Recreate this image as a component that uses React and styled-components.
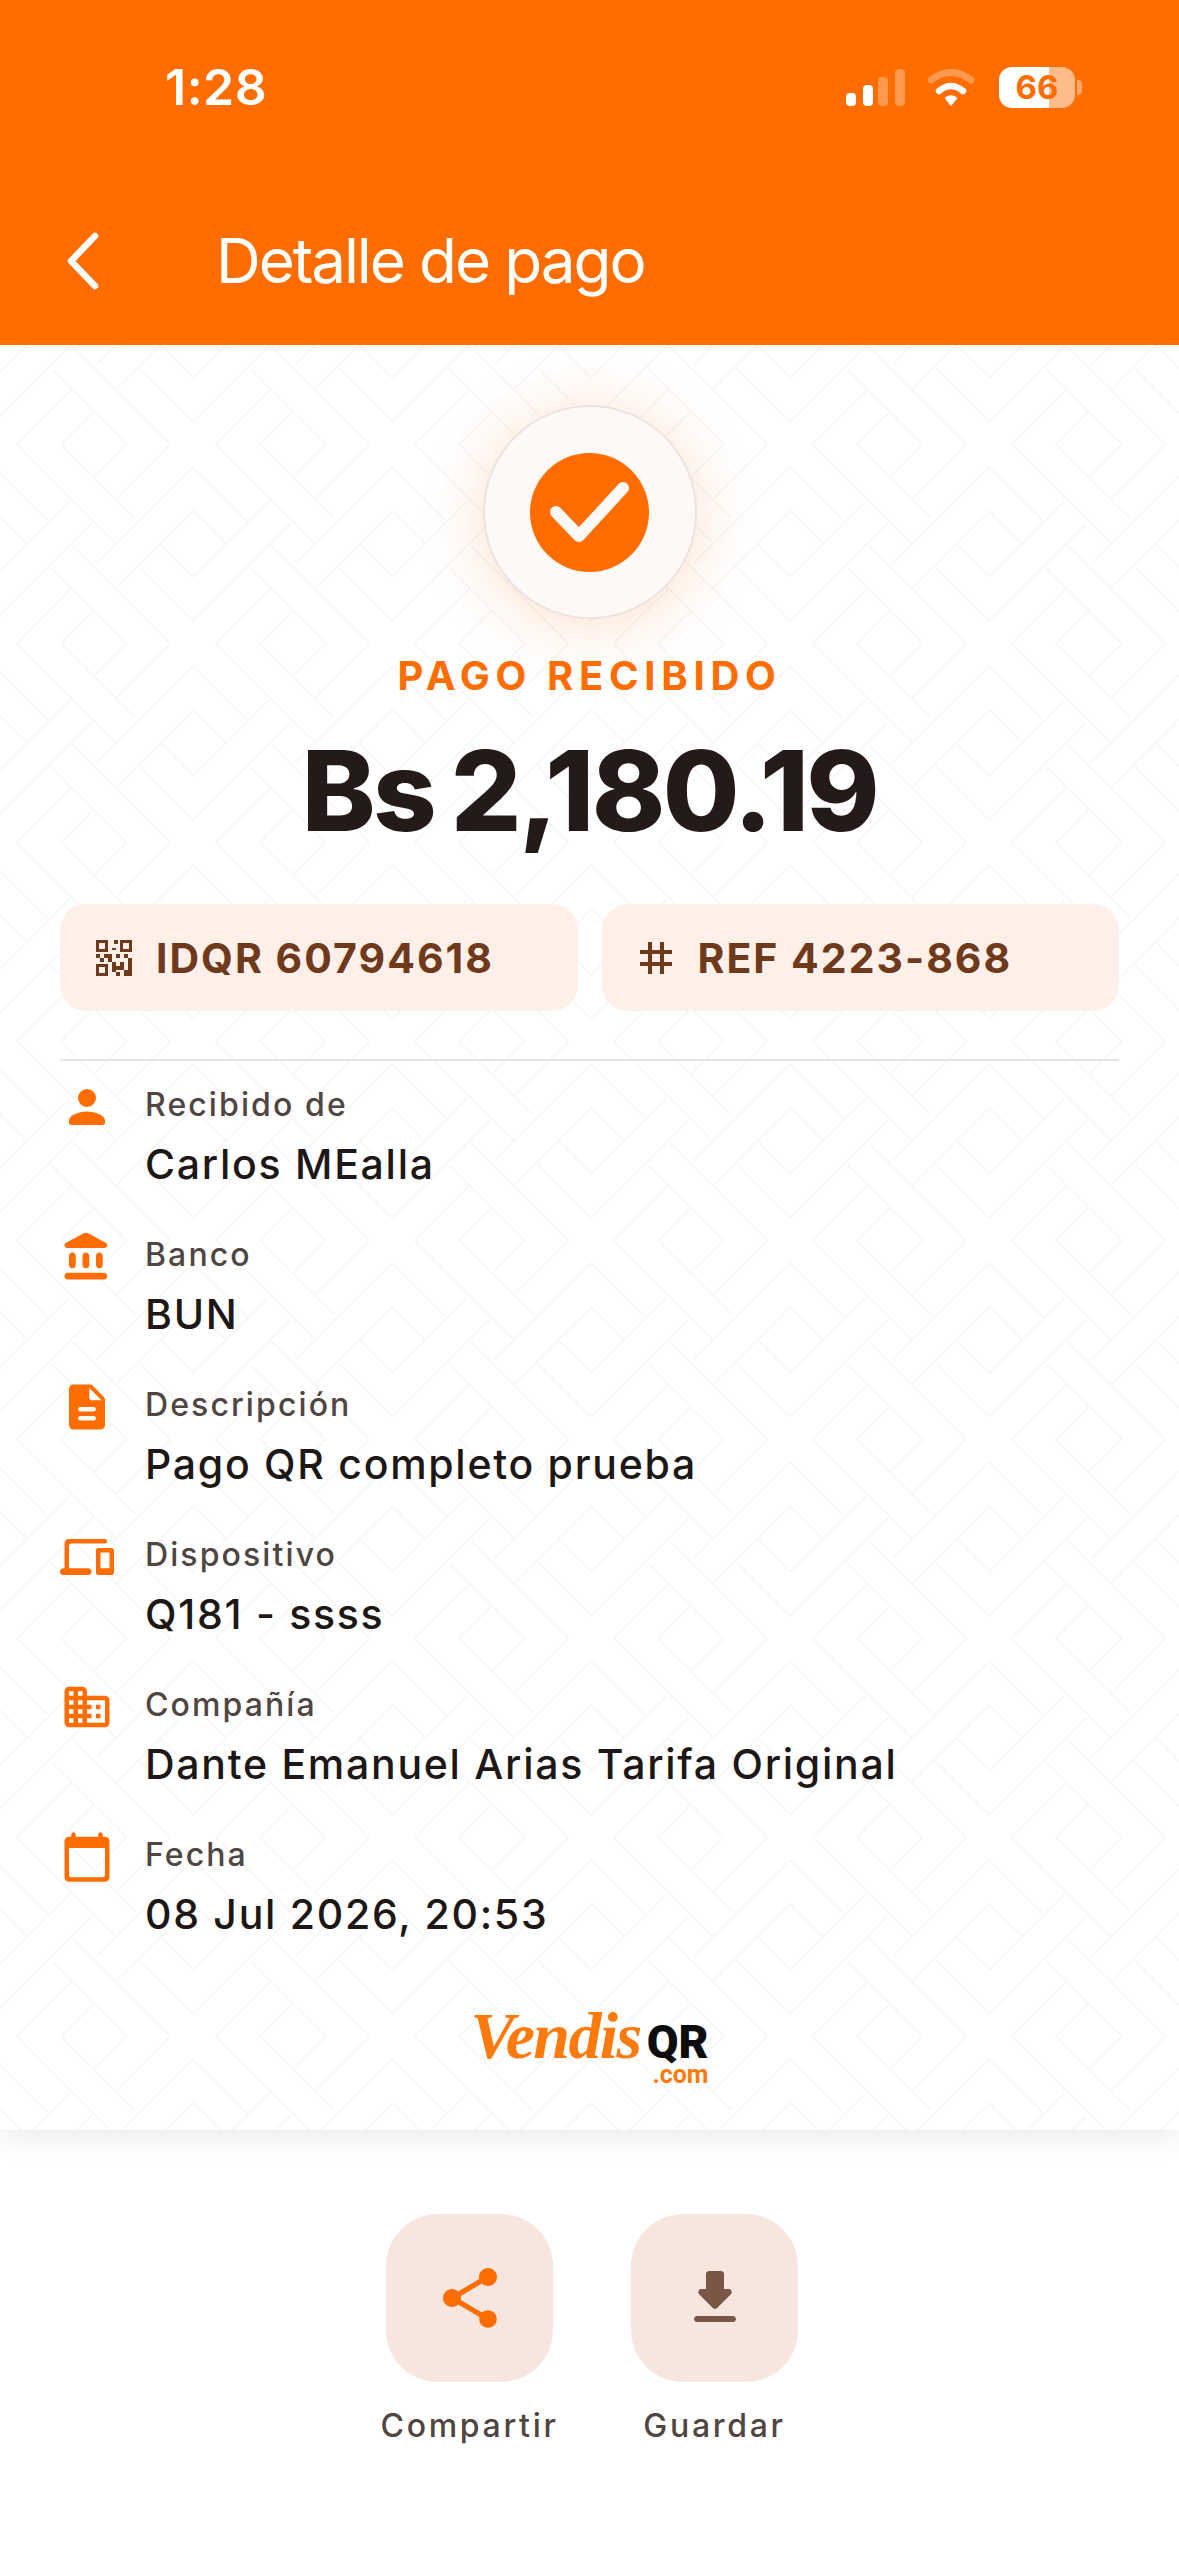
import React from "react";
import styled, { createGlobalStyle } from "styled-components";

const backSlash = [
  [-198, [[218, 510], [578, 740]]],
  [-67, [[155, 380], [578, 680]]],
  [130, [[183, 405], [480, 578]]],
  [263, [[50, 350], [420, 578]]],
];
const slash = [
  [363, [[50, 213], [290, 578]]],
  [496, [[183, 280], [350, 578]]],
  [693, [[-19, 208], [285, 380]]],
  [825, [[-19, 275], [350, 510]]],
];

const buildPattern = () => {
  let d = "";
  for (let i = -2; i <= 2; i++) {
    for (let j = -2; j <= 2; j++) {
      const ox = i * 597;
      const oy = j * 597;
      backSlash.forEach(([c, segs]) =>
        segs.forEach(([a, b]) => {
          d += `M${a + ox} ${a + c + oy}L${b + ox} ${b + c + oy}`;
        })
      );
      slash.forEach(([s, segs]) =>
        segs.forEach(([a, b]) => {
          d += `M${a + ox} ${s - a + oy}L${b + ox} ${s - b + oy}`;
        })
      );
    }
  }
  const svg = `<svg xmlns="http://www.w3.org/2000/svg" width="199" height="199" viewBox="0 0 597 597"><path d="${d}" fill="none" stroke="#f7f7f7" stroke-width="6"/></svg>`;
  return `url("data:image/svg+xml,${encodeURIComponent(svg)}")`;
};

const patternUrl = buildPattern();

const Global = createGlobalStyle`
  html, body { margin: 0; padding: 0; background: #fff; }
  body { font-family: Inter, "Noto Sans", "Liberation Sans", sans-serif; }
  * { box-sizing: border-box; }
`;

const Screen = styled.div`
  width: 1179px;
  height: 2556px;
  background: #ffffff;
  overflow: hidden;
  display: flex;
  flex-direction: column;
`;

const Header = styled.header`
  height: 345px;
  flex: none;
  background: #ff6d00;
  color: #ffffff;
  position: relative;
  z-index: 2;
`;

const StatusBar = styled.div`
  height: 120px;
  padding: 57px 104px 0 165px;
  display: flex;
  justify-content: space-between;
  align-items: flex-start;
`;

const Time = styled.div`
  font-size: 50px;
  line-height: 60px;
  font-weight: 600;
  letter-spacing: 0.5px;
`;

const StatusIcons = styled.div`
  display: flex;
  align-items: center;
  padding-top: 10px;
  gap: 23px;
`;

const Battery = styled.div`
  width: 76px;
  height: 41px;
  border-radius: 13px;
  background: linear-gradient(90deg, #ffffff 0 66%, #ffbc8a 66% 100%);
  color: #ff6d00;
  font-size: 33px;
  font-weight: 700;
  line-height: 41px;
  text-align: center;
  position: relative;
  &::after {
    content: "";
    position: absolute;
    right: -7px;
    top: 13px;
    width: 5px;
    height: 15px;
    border-radius: 0 4px 4px 0;
    background: #ffa766;
  }
`;

const NavBar = styled.div`
  display: flex;
  align-items: center;
  height: 100px;
  margin-top: 91px;
  padding-left: 62px;
  gap: 114px;
`;

const Title = styled.h1`
  margin: 0;
  font-size: 62px;
  line-height: 100px;
  font-weight: 400;
  letter-spacing: -2.1px;
`;

const Card = styled.main`
  height: 1785px;
  flex: none;
  padding: 60px 60px 0;
  background-color: #fff;
  background-image: ${patternUrl};
  background-size: 199px 199px;
  background-position: 0 -5px;
  box-shadow: 0 6px 30px rgba(0, 0, 0, 0.09);
  display: flex;
  flex-direction: column;
  align-items: center;
  position: relative;
  z-index: 1;
`;

const Halo = styled.div`
  width: 214px;
  height: 214px;
  flex: none;
  border-radius: 50%;
  background: #fef9f7;
  border: 2px solid #ebe3e0;
  box-shadow: 0 6px 64px rgba(255, 109, 0, 0.22);
  display: flex;
  align-items: center;
  justify-content: center;
`;

const Tick = styled.div`
  width: 119px;
  height: 119px;
  border-radius: 50%;
  background: #ff6d00;
  display: flex;
`;

const Status = styled.div`
  margin-top: 32px;
  font-size: 40px;
  line-height: 50px;
  font-weight: 700;
  letter-spacing: 5.7px;
  color: #ff6d00;
`;

const Amount = styled.div`
  margin-top: 25px;
  font-size: 111px;
  line-height: 130px;
  font-weight: 800;
  letter-spacing: -2.6px;
  word-spacing: -5px;
  color: #241b18;
`;

const Chips = styled.div`
  align-self: stretch;
  margin-top: 48px;
  display: flex;
  gap: 24px;
`;

const Chip = styled.div`
  flex: 1;
  height: 107px;
  border-radius: 26px;
  padding-left: 30px;
  background: rgba(254, 238, 231, 0.9);
  color: #6f3a1c;
  display: flex;
  align-items: center;
  gap: 18px;
  font-size: 41px;
  font-weight: 700;
  letter-spacing: 2px;
`;

const Divider = styled.div`
  align-self: stretch;
  height: 2px;
  margin-top: 48px;
  background: #ebe3e0;
`;

const Rows = styled.div`
  align-self: stretch;
  margin-top: 19px;
  display: flex;
  flex-direction: column;
`;

const Row = styled.div`
  height: 150px;
  display: flex;
  gap: 31px;
`;

const RowText = styled.div`
  display: flex;
  flex-direction: column;
`;

const Label = styled.div`
  margin-top: 2px;
  font-size: 32px;
  line-height: 46px;
  font-weight: 500;
  letter-spacing: 2.1px;
  color: #4f4542;
`;

const Value = styled.div`
  margin-top: 11px;
  font-size: 41px;
  line-height: 50px;
  font-weight: 500;
  letter-spacing: 1.72px;
  color: #1d1715;
`;

const Logo = styled.div`
  margin-top: 18px;
  display: flex;
  align-items: flex-start;
  gap: 6px;
  height: 76px;
`;

const LogoScript = styled.span`
  font-family: "Liberation Serif", serif;
  font-style: italic;
  font-weight: 700;
  font-size: 66px;
  line-height: 76px;
  letter-spacing: -1.6px;
  color: #ff7a0d;
`;

const LogoSide = styled.div`
  display: flex;
  flex-direction: column;
  align-items: flex-end;
  padding-top: 22px;
`;

const LogoQR = styled.span`
  font-family: Roboto, sans-serif;
  font-weight: 900;
  font-size: 46px;
  line-height: 44px;
  color: #0d0d0d;
`;

const LogoCom = styled.span`
  font-family: Roboto, sans-serif;
  font-weight: 700;
  font-size: 25px;
  line-height: 22px;
  color: #ff7a0d;
`;

const Actions = styled.div`
  flex: 1;
  padding: 84px 0 0 5px;
  display: flex;
  justify-content: center;
  gap: 78px;
`;

const Action = styled.div`
  width: 167px;
  display: flex;
  flex-direction: column;
  align-items: center;
`;

const ActionButton = styled.button`
  width: 167px;
  height: 168px;
  padding: 0;
  border: 0;
  border-radius: 52px;
  background: #f6e6de;
  color: ${(p) => p.$color};
  display: flex;
  align-items: center;
  justify-content: center;
`;

const ActionLabel = styled.div`
  margin-top: 21px;
  white-space: nowrap;
  font-size: 32px;
  line-height: 46px;
  font-weight: 500;
  letter-spacing: 2.7px;
  color: #4f4542;
`;

const Glyph = ({ size = 54, color = "#ff6d00", d, children }) => (
  <svg width={size} height={size} viewBox="0 0 24 24" fill={color} style={{ flex: "none" }}>
    {d ? <path d={d} /> : children}
  </svg>
);

const ICONS = {
  person:
    "M12 12a4 4 0 1 0 0-8 4 4 0 0 0 0 8zm0 2c-2.67 0-8 1.34-8 4v1c0 .55.45 1 1 1h14c.55 0 1-.45 1-1v-1c0-2.66-5.33-4-8-4z",
  bank:
    "M4 11.5v4c0 .83.67 1.5 1.5 1.5S7 16.33 7 15.5v-4c0-.83-.67-1.5-1.5-1.5S4 10.67 4 11.5zm6 0v4c0 .83.67 1.5 1.5 1.5s1.5-.67 1.5-1.5v-4c0-.83-.67-1.5-1.5-1.5s-1.5.67-1.5 1.5zM3.5 22h16c.83 0 1.5-.67 1.5-1.5s-.67-1.5-1.5-1.5h-16c-.83 0-1.5.67-1.5 1.5S2.67 22 3.5 22zM16 11.5v4c0 .83.67 1.5 1.5 1.5s1.5-.67 1.5-1.5v-4c0-.83-.67-1.5-1.5-1.5s-1.5.67-1.5 1.5zM10.57 1.49l-7.9 4.16c-.41.21-.67.64-.67 1.1C2 7.44 2.56 8 3.25 8h16.51C20.44 8 21 7.44 21 6.75c0-.46-.26-.89-.67-1.1l-7.9-4.16c-.58-.31-1.28-.31-1.86 0z",
  doc:
    "M14.59 2.59c-.38-.38-.89-.59-1.42-.59H6c-1.1 0-2 .9-2 2v16c0 1.1.89 2 1.99 2H18c1.1 0 2-.9 2-2V8.83c0-.53-.21-1.04-.59-1.41l-4.82-4.83zM15 18H9c-.55 0-1-.45-1-1s.45-1 1-1h6c.55 0 1 .45 1 1s-.45 1-1 1zm0-4H9c-.55 0-1-.45-1-1s.45-1 1-1h6c.55 0 1 .45 1 1s-.45 1-1 1zm-2-6V3.5L18.5 9H14c-.55 0-1-.45-1-1z",
  devices:
    "M4 7c0-.55.45-1 1-1h15c.55 0 1-.45 1-1s-.45-1-1-1H4c-1.1 0-2 .9-2 2v11h-.5c-.83 0-1.5.67-1.5 1.5S.67 20 1.5 20h11c.83 0 1.5-.67 1.5-1.5s-.67-1.5-1.5-1.5H4V7zm19 1h-6c-.55 0-1 .45-1 1v10c0 .55.45 1 1 1h6c.55 0 1-.45 1-1V9c0-.55-.45-1-1-1zm-1 9h-4v-7h4v7z",
  domain:
    "M12 7V5c0-1.1-.9-2-2-2H4c-1.1 0-2 .9-2 2v14c0 1.1.9 2 2 2h16c1.1 0 2-.9 2-2V9c0-1.1-.9-2-2-2h-8zM6 19H4v-2h2v2zm0-4H4v-2h2v2zm0-4H4V9h2v2zm0-4H4V5h2v2zm4 12H8v-2h2v2zm0-4H8v-2h2v2zm0-4H8V9h2v2zm0-4H8V5h2v2zm10 12h-8v-2h2v-2h-2v-2h2v-2h-2V9h8v10zm-2-8h-2v2h2v-2zm0 4h-2v2h2v-2z",
  calendar:
    "M20 3h-1V2c0-.55-.45-1-1-1s-1 .45-1 1v1H7V2c0-.55-.45-1-1-1s-1 .45-1 1v1H4c-1.1 0-2 .9-2 2v16c0 1.1.9 2 2 2h16c1.1 0 2-.9 2-2V5c0-1.1-.9-2-2-2zm-1 18H5c-.55 0-1-.45-1-1V8h16v12c0 .55-.45 1-1 1z",
  share:
    "M18 16.08c-.76 0-1.44.3-1.96.77L8.91 12.7c.05-.23.09-.46.09-.7s-.04-.47-.09-.7l7.05-4.11c.54.5 1.25.81 2.04.81 1.66 0 3-1.34 3-3s-1.34-3-3-3-3 1.34-3 3c0 .24.04.47.09.7L8.04 9.81C7.5 9.31 6.79 9 6 9c-1.66 0-3 1.34-3 3s1.34 3 3 3c.79 0 1.5-.31 2.04-.81l7.12 4.16c-.05.21-.08.43-.08.65 0 1.61 1.31 2.92 2.92 2.92 1.61 0 2.92-1.31 2.92-2.92s-1.31-2.92-2.92-2.92z",
  download:
    "M16.59 9H15V4c0-.55-.45-1-1-1h-4c-.55 0-1 .45-1 1v5H7.41c-.89 0-1.34 1.08-.71 1.71l4.59 4.59c.39.39 1.02.39 1.41 0l4.59-4.59c.63-.63.19-1.71-.7-1.71zM5 19c0 .55.45 1 1 1h12c.55 0 1-.45 1-1s-.45-1-1-1H6c-.55 0-1 .45-1 1z",
  qr:
    "M15 21h-2v-2h2v2zm-2-7h-2v5h2v-5zm8-2h-2v4h2v-4zm-2-2h-2v2h2v-2zM7 12H5v2h2v-2zm-2-2H3v2h2v-2zm7-5h2V3h-2v2zM4.5 4.5v3h3v-3h-3zM9 9H3V3h6v6zm-4.5 10.5v-3h3v3h-3zM3 21h6v-6H3v6zm13.5-16.5v3h3v-3h-3zM15 9V3h6v6h-6zm2 8v-3h-2v2h-2v2h4zm2 4v-3h-2v3h2zm2-3h-2v3h2v-3zm0-2v2h-2v-2h2zM11 10H7v2h2v2h2v-4zm2-2h-2V7h2v1zm0 4v-2h2v2h-2z",
  tag:
    "M20 10V8h-4V4h-2v4h-4V4H8v4H4v2h4v4H4v2h4v4h2v-4h4v4h2v-4h4v-2h-4v-4h4zm-6 4h-4v-4h4v4z",
};

const rows = [
  ["person", "Recibido de", "Carlos MEalla"],
  ["bank", "Banco", "BUN"],
  ["doc", "Descripción", "Pago QR completo prueba"],
  ["devices", "Dispositivo", "Q181 - ssss"],
  ["domain", "Compañía", "Dante Emanuel Arias Tarifa Original"],
  ["calendar", "Fecha", "08 Jul 2026, 20:53"],
];

export default function App() {
  return (
    <Screen>
      <Global />
      <Header>
        <StatusBar>
          <Time>1:28</Time>
          <StatusIcons>
            <svg width="130" height="37" viewBox="846 69 130 37">
              <rect x="846" y="93" width="10" height="13" rx="4" fill="#fff" />
              <rect x="863" y="85" width="10" height="21" rx="4" fill="#fff" />
              <rect x="878" y="77" width="10" height="29" rx="4" fill="#fff" fillOpacity=".3" />
              <rect x="895" y="69" width="10" height="37" rx="4" fill="#fff" fillOpacity=".3" />
              <path d="M931 80 Q951 65 971 80" fill="none" stroke="#fff" strokeOpacity=".3" strokeWidth="7" strokeLinecap="round" />
              <path d="M939 91 Q951 81 963 91" fill="none" stroke="#fff" strokeWidth="6.5" strokeLinecap="round" />
              <path d="M951 105 L945.5 98 Q951 94 956.5 98 Z" fill="#fff" stroke="#fff" strokeWidth="1.5" strokeLinejoin="round" />
            </svg>
            <Battery>66</Battery>
          </StatusIcons>
        </StatusBar>
        <NavBar>
          <svg width="40" height="62" viewBox="0 0 40 62">
            <path d="M33 6 L9 31 L33 56" fill="none" stroke="#fff" strokeWidth="6.5" strokeLinecap="round" strokeLinejoin="round" />
          </svg>
          <Title>Detalle de pago</Title>
        </NavBar>
      </Header>
      <Card>
        <Halo>
          <Tick>
            <svg width="119" height="119" viewBox="0 0 119 119">
              <path d="M26 59 L49 83 L93 35" fill="none" stroke="#fef9f7" strokeWidth="12" strokeLinecap="round" strokeLinejoin="round" />
            </svg>
          </Tick>
        </Halo>
        <Status>PAGO RECIBIDO</Status>
        <Amount>Bs 2,180.19</Amount>
        <Chips>
          <Chip>
            <Glyph size={48} color="#6f3a1c" d={ICONS.qr} />
            IDQR 60794618
          </Chip>
          <Chip>
            <Glyph size={48} color="#6f3a1c" d={ICONS.tag} />
            REF 4223-868
          </Chip>
        </Chips>
        <Divider />
        <Rows>
          {rows.map(([icon, label, value]) => (
            <Row key={label}>
              <Glyph d={ICONS[icon]} />
              <RowText>
                <Label>{label}</Label>
                <Value>{value}</Value>
              </RowText>
            </Row>
          ))}
        </Rows>
        <Logo>
          <LogoScript>Vendis</LogoScript>
          <LogoSide>
            <LogoQR>QR</LogoQR>
            <LogoCom>.com</LogoCom>
          </LogoSide>
        </Logo>
      </Card>
      <Actions>
        <Action>
          <ActionButton $color="#ff6d00" aria-label="Compartir">
            <Glyph size={72} color="currentColor" d={ICONS.share} />
          </ActionButton>
          <ActionLabel>Compartir</ActionLabel>
        </Action>
        <Action>
          <ActionButton $color="#7a5646" aria-label="Guardar">
            <Glyph size={72} color="currentColor" d={ICONS.download} />
          </ActionButton>
          <ActionLabel>Guardar</ActionLabel>
        </Action>
      </Actions>
    </Screen>
  );
}
